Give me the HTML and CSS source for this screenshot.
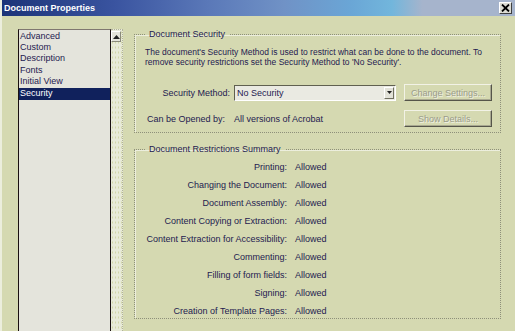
FILE: index.html
```html
<!DOCTYPE html>
<html>
<head>
<meta charset="utf-8">
<link rel="stylesheet" href="styles.css">
</head>
<body>
<div class="window">
  <div class="titlebar">
    <span class="title">Document Properties</span>
    <span class="close"><svg width="9" height="8" viewBox="0 0 9 8"><path d="M1 0.5 L8 7.5 M8 0.5 L1 7.5" stroke="#000" stroke-width="1.8"/></svg></span>
  </div>
  <div class="main">
    <div class="listwrap">
      <ul class="list">
        <li>Advanced</li>
        <li>Custom</li>
        <li>Description</li>
        <li>Fonts</li>
        <li>Initial View</li>
        <li class="sel">Security</li>
      </ul>
      <div class="scroll">
        <div class="arrow"><svg width="7" height="4" viewBox="0 0 7 4"><path d="M0 4 L3.5 0 L7 4 Z" fill="#222"/></svg></div>
      </div>
    </div>
    <div class="panel">
      <fieldset class="group g1">
        <legend>Document Security</legend>
        <p class="desc">The document's Security Method is used to restrict what can be done to the document. To remove security restrictions set the Security Method to 'No Security'.</p>
        <div class="row r1">
          <span class="lbl l1">Security Method:</span>
          <div class="select"><span>No Security</span><span class="dd"><svg width="5" height="3" viewBox="0 0 5 3"><path d="M0 0 L5 0 L2.5 3 Z" fill="#222"/></svg></span></div>
          <span class="btn">Change Settings...</span>
        </div>
        <div class="row r2">
          <span class="lbl l2">Can be Opened by:</span>
          <span class="val2">All versions of Acrobat</span>
          <span class="btn">Show Details...</span>
        </div>
      </fieldset>
      <fieldset class="group g2">
        <legend>Document Restrictions Summary</legend>
        <div class="rows">
          <div class="rrow"><span class="rl">Printing:</span><span>Allowed</span></div>
          <div class="rrow"><span class="rl">Changing the Document:</span><span>Allowed</span></div>
          <div class="rrow"><span class="rl">Document Assembly:</span><span>Allowed</span></div>
          <div class="rrow"><span class="rl">Content Copying or Extraction:</span><span>Allowed</span></div>
          <div class="rrow"><span class="rl">Content Extraction for Accessibility:</span><span>Allowed</span></div>
          <div class="rrow"><span class="rl">Commenting:</span><span>Allowed</span></div>
          <div class="rrow"><span class="rl">Filling of form fields:</span><span>Allowed</span></div>
          <div class="rrow"><span class="rl">Signing:</span><span>Allowed</span></div>
          <div class="rrow"><span class="rl">Creation of Template Pages:</span><span>Allowed</span></div>
        </div>
      </fieldset>
    </div>
  </div>
</div>
</body>
</html>
```
FILE: styles.css
```css
html, body {
  margin: 0;
  padding: 0;
  width: 515px;
  height: 331px;
  overflow: hidden;
  background: #d5d9b1;
}
.window {
  width: 515px;
  height: 331px;
  overflow: hidden;
  font-family: "Liberation Sans", Arial, sans-serif;
  font-size: 9px;
  color: #1e2050;
  border-left: 2px solid #eceedd;
  box-sizing: border-box;
}
.titlebar {
  height: 16px;
  display: flex;
  align-items: center;
  justify-content: space-between;
  background: linear-gradient(90deg, #1c3478 0%, #3a54a0 22%, #5a78b8 40%, #7092c6 55%, #6aa6d6 68%, #72b6dc 76%, #a6b4cc 82%, #a6b4cc 100%);
  padding: 0 3px 0 2px;
}
.title {
  color: #fff;
  font-weight: bold;
  font-size: 9px;
}
.close {
  width: 13px;
  height: 12px;
  background: #dcdcd4;
  border: 1px solid;
  border-color: #fff #404040 #404040 #fff;
  box-sizing: border-box;
  display: flex;
  align-items: center;
  justify-content: center;
}
.main {
  display: flex;
  padding: 13px 0 0 16px;
  gap: 11px;
}
.listwrap {
  display: flex;
  height: 320px;
}
.list {
  list-style: none;
  margin: 0;
  padding: 0;
  width: 91px;
  background: #e4e4dc;
  border: 1px solid #1a1010;
  border-top-color: #807870;
}
.list li {
  height: 11.6px;
  line-height: 11.6px;
  padding-left: 1px;
  white-space: nowrap;
  overflow: hidden;
}
.list li:first-child {
  line-height: 8px;
  height: 10px;
  margin-top: 1.6px;
}
.list li.sel {
  background: #10215c;
  color: #fff;
}
.scroll {
  width: 11px;
  background-color: #e8ead8;
  background-image: radial-gradient(#d2d6a8 0.5px, transparent 0.7px);
  background-size: 3px 5px;
  border: 1px dotted #b0b29a;
  border-left: none;
}
.arrow {
  width: 10px;
  height: 11px;
  margin: 1px 0 0 0;
  box-sizing: border-box;
  border: 1px solid;
  border-color: #fff #8a8a7a #8a8a7a #fff;
  background: #e4e4da;
  display: flex;
  align-items: center;
  justify-content: center;
}
.panel {
  width: 367px;
  display: flex;
  flex-direction: column;
  gap: 11px;
}
.group {
  margin: 0;
  padding: 0;
  border: 1px dotted #8e907a;
  box-shadow: inset 1px 1px 0 #eceedd;
  min-width: 0;
}
.group legend {
  margin-left: 10px;
  padding: 0 4px;
  line-height: 10px;
}
.g1 {
  height: 104px;
  box-sizing: border-box;
  padding: 8px 0 0 10px;
}
.g1 legend {
  margin-left: 0;
}
.desc {
  margin: 0;
  line-height: 10px;
  width: 350px;
  font-size: 8.5px;
}
.row {
  display: flex;
  align-items: center;
}
.r1 {
  margin-top: 17px;
  height: 17px;
}
.r2 {
  margin-top: 9px;
  height: 17px;
}
.lbl {
  text-align: right;
  white-space: nowrap;
}
.l1 { width: 85px; margin-right: 4px; }
.l2 { width: 80px; margin-right: 9px; }
.select {
  width: 162px;
  height: 16px;
  box-sizing: border-box;
  background: #eaeae2;
  border: 1px solid;
  border-color: #606050 #fff #fff #606050;
  display: flex;
  align-items: center;
  justify-content: space-between;
  padding-left: 2px;
  margin-right: 8px;
}
.dd {
  width: 10px;
  height: 12px;
  margin-right: 1px;
  box-sizing: border-box;
  border: 1px solid;
  border-color: #fff #707060 #707060 #fff;
  background: #e2e2d8;
  display: flex;
  align-items: center;
  justify-content: center;
}
.val2 {
  width: 170px;
}
.btn {
  width: 88px;
  height: 17px;
  box-sizing: border-box;
  border: 1px solid;
  border-color: #f2f2e6 #55554a #55554a #f2f2e6;
  box-shadow: inset -1px -1px 0 #a8a890;
  display: flex;
  align-items: center;
  justify-content: center;
  color: #9a9c8a;
  text-shadow: 1px 1px 0 #f0f0e4;
}
.g2 {
  height: 175px;
  box-sizing: border-box;
  padding: 0;
}
.rows {
  height: 162px;
  overflow: hidden;
  padding-top: 4px;
  box-sizing: border-box;
}
.rrow {
  display: flex;
  height: 18px;
  align-items: center;
}
.rl {
  width: 152px;
  text-align: right;
  margin-right: 8px;
  white-space: nowrap;
}
```
